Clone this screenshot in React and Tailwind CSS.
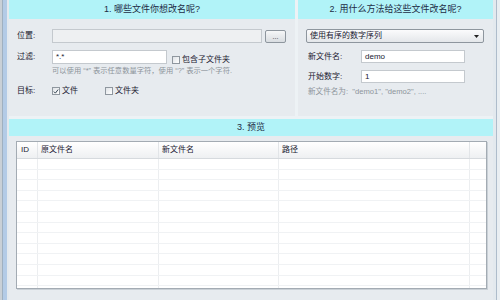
import React from "react";

const font = { fontFamily: '"Liberation Sans", "Noto Sans CJK SC", sans-serif' };

function Check({ checked }) {
  return (
    <div className="w-[8px] h-[8px] border border-[#8f979f] bg-gradient-to-br from-[#dfe3e7] to-[#ffffff] flex items-center justify-center shrink-0">
      {checked && (
        <svg width="7" height="7" viewBox="0 0 7 7">
          <path d="M1 3.6 L2.8 5.4 L6 1.2" stroke="#2a3a4a" strokeWidth="1.1" fill="none" />
        </svg>
      )}
    </div>
  );
}

function Header({ children, h = "h-[19px]" }) {
  return (
    <div className={`${h} bg-[#b1f3f8] flex items-center justify-center text-[9px] text-[#1d2c45] leading-none`}>
      {children}
    </div>
  );
}

export default function App() {
  const rows = Array.from({ length: 13 });
  return (
    <div className="w-[500px] h-[300px] flex bg-[#edf2f5] overflow-hidden text-[#1a2030]" style={font}>
      {/* left frame */}
      <div className="w-[2px] bg-[#c9d0d6]" />
      <div className="w-[1px] bg-[#9fb0c0]" />
      <div className="w-[4px] bg-[#b3cbe6]" />
      <div className="w-[2px] bg-[#e3e9ee]" />

      <div className="w-[484px] flex flex-col">
        <div className="h-[116px] flex gap-[3px]">
          {/* panel 1 */}
          <div className="w-[286px] bg-[#e7ebef] flex flex-col">
            <Header>1. 哪些文件你想改名呢?</Header>
            <div className="flex items-center mt-[10px] pl-[8px] h-[14px]">
              <span className="w-[35px] text-[8px]">位置:</span>
              <div className="w-[210px] h-[14px] border border-[#c4c9ce] bg-[#eef0f2]" />
              <div className="ml-[3px] w-[21px] h-[13px] border border-[#8e969e] rounded-[2px] bg-gradient-to-b from-[#f6f7f8] to-[#d9dde1] flex items-center justify-center text-[7px] leading-none text-[#333]">
                ...
              </div>
            </div>
            <div className="flex items-center mt-[7px] pl-[8px] h-[14px]">
              <span className="w-[35px] text-[8px]">过滤:</span>
              <div className="w-[115px] h-[14px] border border-[#c4c9ce] bg-white text-[8px] leading-none pl-[3px] pt-[2px]">
                *.*
              </div>
              <div className="ml-[5px] mt-[5px] flex items-center gap-[2px]">
                <Check />
                <span className="text-[8px] leading-none">包含子文件夹</span>
              </div>
            </div>
            <div className="pl-[43px] mt-[3px] text-[7.3px] text-[#8d949b] leading-none whitespace-nowrap">
              可以使用 “*” 表示任意数量字符，使用 “?” 表示一个字符.
            </div>
            <div className="flex items-center mt-[12px] pl-[8px] h-[10px]">
              <span className="w-[35px] text-[8px]">目标:</span>
              <div className="flex items-center gap-[2px] w-[53px]">
                <Check checked />
                <span className="text-[8px] leading-none">文件</span>
              </div>
              <div className="flex items-center gap-[2px]">
                <Check />
                <span className="text-[8px] leading-none">文件夹</span>
              </div>
            </div>
          </div>

          {/* panel 2 */}
          <div className="flex-1 bg-[#e7ebef] flex flex-col">
            <Header>2. 用什么方法给这些文件改名呢?</Header>
            <div className="mt-[10px] ml-[8px] w-[178px] h-[14px] border border-[#8e969e] rounded-[2px] bg-gradient-to-b from-[#fbfbfc] to-[#e4e7ea] flex items-center justify-between pl-[3px] pr-[4px]">
              <span className="text-[8px] leading-none">使用有序的数字序列</span>
              <svg width="5" height="3" viewBox="0 0 5 3">
                <path d="M0 0 L5 0 L2.5 3 Z" fill="#222" />
              </svg>
            </div>
            <div className="flex items-center mt-[7px] pl-[10px] h-[13px]">
              <span className="w-[53px] text-[8px]">新文件名:</span>
              <div className="w-[104px] h-[13px] border border-[#c4c9ce] bg-white text-[8px] leading-none pl-[3px] pt-[2px]">
                demo
              </div>
            </div>
            <div className="flex items-center mt-[7px] pl-[10px] h-[13px]">
              <span className="w-[53px] text-[8px]">开始数字:</span>
              <div className="w-[104px] h-[13px] border border-[#c4c9ce] bg-white text-[8px] leading-none pl-[3px] pt-[2px]">
                1
              </div>
            </div>
            <div className="pl-[10px] mt-[5px] text-[7.6px] text-[#8d949b] leading-none whitespace-nowrap">
              新文件名为:&nbsp; "demo1", "demo2", ....
            </div>
          </div>
        </div>

        {/* panel 3 */}
        <div className="mt-[3px] flex-1 bg-[#e7ebef] flex flex-col">
          <Header h="h-[17px]">3. 预览</Header>
          <div className="pt-[5px] pl-[7px] pr-[6px]">
            <div className="h-[148px] border border-[#a3abb3] bg-white shadow-[1px_1px_0_#c9d0d6] overflow-hidden">
              <div className="flex h-[17px] border-b border-[#d6dade] bg-gradient-to-b from-[#ffffff] to-[#eef0f2] text-[8px] leading-none">
                <div className="w-[21px] border-r border-[#e2e5e8] flex items-center pl-[4px]">ID</div>
                <div className="w-[121px] border-r border-[#e2e5e8] flex items-center pl-[3px]">原文件名</div>
                <div className="w-[120px] border-r border-[#e2e5e8] flex items-center pl-[3px]">新文件名</div>
                <div className="w-[191px] border-r border-[#e2e5e8] flex items-center pl-[3px]">路径</div>
                <div className="flex-1" />
              </div>
              {rows.map((_, i) => (
                <div key={i} className="flex h-[10.6px] border-b border-[#f0f2f4]">
                  <div className="w-[21px] border-r border-[#eceef0]" />
                  <div className="w-[121px] border-r border-[#eceef0]" />
                  <div className="w-[120px] border-r border-[#eceef0]" />
                  <div className="w-[191px] border-r border-[#eceef0]" />
                  <div className="flex-1" />
                </div>
              ))}
            </div>
          </div>
        </div>
      </div>

      {/* right frame */}
      <div className="w-[3px] bg-[#e3e9ee]" />
      <div className="w-[1px] bg-[#aebccb]" />
      <div className="flex-1 bg-[#e9eef2]" />
    </div>
  );
}
